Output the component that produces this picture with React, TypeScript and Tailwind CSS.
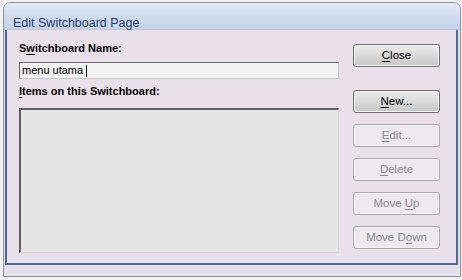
const font = "font-['Liberation_Sans',Arial,sans-serif]";

const buttons = [
  { pre: "", key: "N", post: "ew...", enabled: true },
  { pre: "", key: "E", post: "dit...", enabled: false },
  { pre: "", key: "D", post: "elete", enabled: false },
  { pre: "Move ", key: "U", post: "p", enabled: false },
  { pre: "Move D", key: "o", post: "wn", enabled: false },
];

function DlgButton({ pre, keyChar, post, enabled }: { pre: string; keyChar: string; post: string; enabled: boolean }) {
  return (
    <div
      className={`h-[23px] w-[87px] flex items-center justify-center rounded-[3px] border text-[11.5px] ${
        enabled
          ? "border-[#6f6f6f] bg-gradient-to-b from-[#ececec] via-[#dadada] to-[#c6c6c6] text-black shadow-[inset_0_0_0_1px_#f4f4f4]"
          : "border-[#a9a9ab] bg-[#eee8ef] text-[#8a8a8a] shadow-[inset_0_0_0_1px_#f6f2f6]"
      }`}
    >
      <span>
        {pre}
        <span className="underline underline-offset-2">{keyChar}</span>
        {post}
      </span>
    </div>
  );
}

export default function App() {
  return (
    <div className={`w-[462px] h-[280px] bg-[#f1f1f1] pt-[2px] pl-[3px] ${font}`}>
      <div className="w-[458px] h-[275px] border border-[#8d939f] rounded-t-[7px] bg-[#e5e1ec] flex flex-col overflow-hidden">
        {/* title bar */}
        <div className="h-[27px] shrink-0 flex items-start pt-[14px] pl-[9px] bg-gradient-to-b from-[#e3eaf5] via-[#d0dcef] to-[#c5d3ea] border-b border-[#b9c6dd]">
          <span className="text-[12.5px] text-[#1f3c6b] leading-none">Edit Switchboard Page</span>
        </div>

        <div className="flex-1 flex pl-px pr-[2px] pb-[11px]">
          {/* client area */}
          <div className="flex-1 border-l-2 border-r-2 border-b-2 border-[#50699c] bg-[#eae0ea] flex pl-[12px] pt-[11px] gap-[14px]">
            <div className="w-[320px] flex flex-col">
              <div className="text-[11px] font-bold leading-[14px] text-black">
                S<span className="underline underline-offset-2">w</span>itchboard Name:
              </div>
              <div className="mt-[7px] h-[17px] border border-t-[#6b6b6b] border-l-[#6b6b6b] border-r-[#c4c4c4] border-b-[#c4c4c4] bg-[#f2f2f2] flex items-center pl-[2px] text-[11px] text-black">
                menu utama&nbsp;
                <span className="w-px h-[12px] bg-black" />
              </div>
              <div className="mt-[5px] text-[11px] font-bold leading-[14px] text-black">
                <span className="underline underline-offset-2">I</span>tems on this Switchboard:
              </div>
              <div className="mt-[10px] h-[145px] border-t-2 border-l-2 border-t-[#5e5e5e] border-l-[#5e5e5e] border-r border-b border-r-[#d8d8d8] border-b-[#d8d8d8] bg-[#e5e5e5]" />
            </div>

            <div className="flex flex-col pt-[3px]">
              <DlgButton pre="" keyChar="C" post="lose" enabled />
              <div className="mt-[23px] flex flex-col gap-[11px]">
                {buttons.map((b) => (
                  <DlgButton key={b.pre + b.key + b.post} pre={b.pre} keyChar={b.key} post={b.post} enabled={b.enabled} />
                ))}
              </div>
            </div>
          </div>
        </div>
      </div>
    </div>
  );
}
